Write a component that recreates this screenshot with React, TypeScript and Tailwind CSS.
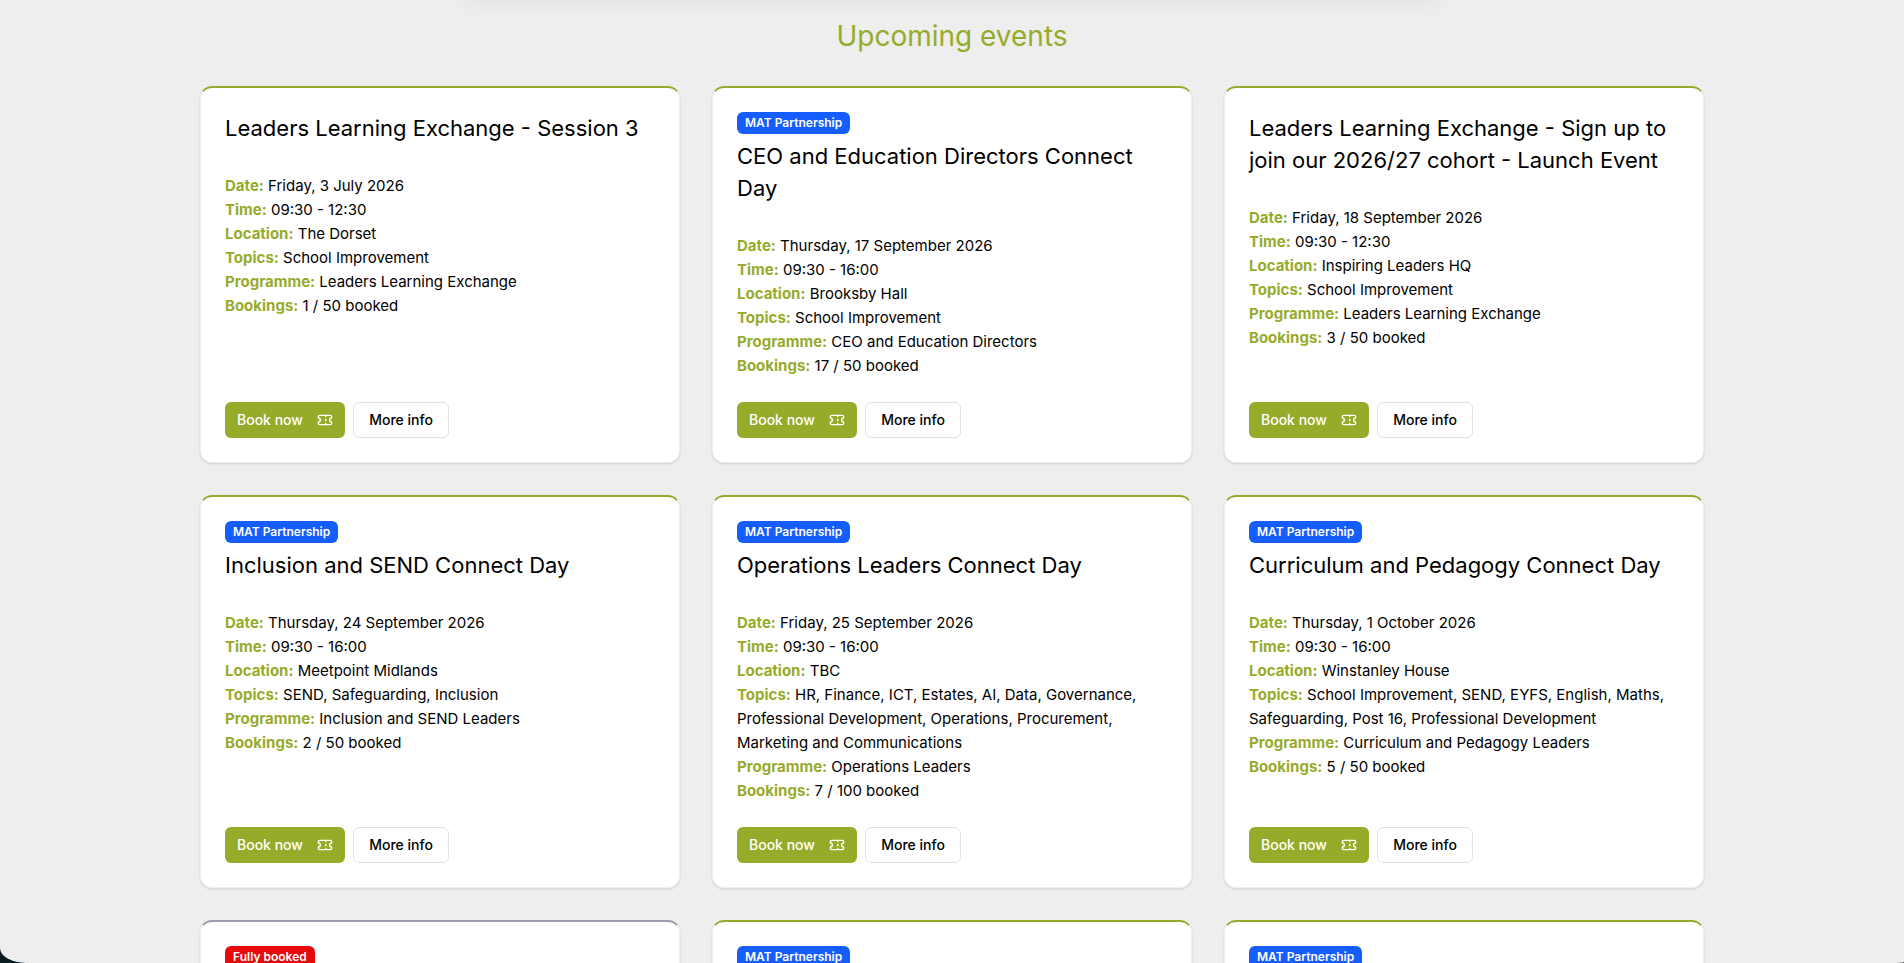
import React from "react";

type Badge = "partnership" | "full";

interface EventItem {
  title: string;
  badge?: Badge;
  date: string;
  time: string;
  location: string;
  topics: string;
  programme: string;
  bookings: string;
}

const EVENTS: EventItem[] = [
  {
    title: "Leaders Learning Exchange - Session 3",
    date: "Friday, 3 July 2026",
    time: "09:30 - 12:30",
    location: "The Dorset",
    topics: "School Improvement",
    programme: "Leaders Learning Exchange",
    bookings: "1 / 50 booked",
  },
  {
    title: "CEO and Education Directors Connect Day",
    badge: "partnership",
    date: "Thursday, 17 September 2026",
    time: "09:30 - 16:00",
    location: "Brooksby Hall",
    topics: "School Improvement",
    programme: "CEO and Education Directors",
    bookings: "17 / 50 booked",
  },
  {
    title: "Leaders Learning Exchange - Sign up to join our 2026/27 cohort - Launch Event",
    date: "Friday, 18 September 2026",
    time: "09:30 - 12:30",
    location: "Inspiring Leaders HQ",
    topics: "School Improvement",
    programme: "Leaders Learning Exchange",
    bookings: "3 / 50 booked",
  },
  {
    title: "Inclusion and SEND Connect Day",
    badge: "partnership",
    date: "Thursday, 24 September 2026",
    time: "09:30 - 16:00",
    location: "Meetpoint Midlands",
    topics: "SEND, Safeguarding, Inclusion",
    programme: "Inclusion and SEND Leaders",
    bookings: "2 / 50 booked",
  },
  {
    title: "Operations Leaders Connect Day",
    badge: "partnership",
    date: "Friday, 25 September 2026",
    time: "09:30 - 16:00",
    location: "TBC",
    topics:
      "HR, Finance, ICT, Estates, AI, Data, Governance, Professional Development, Operations, Procurement, Marketing and Communications",
    programme: "Operations Leaders",
    bookings: "7 / 100 booked",
  },
  {
    title: "Curriculum and Pedagogy Connect Day",
    badge: "partnership",
    date: "Thursday, 1 October 2026",
    time: "09:30 - 16:00",
    location: "Winstanley House",
    topics:
      "School Improvement, SEND, EYFS, English, Maths, Safeguarding, Post 16, Professional Development",
    programme: "Curriculum and Pedagogy Leaders",
    bookings: "5 / 50 booked",
  },
];

const NEXT_BADGES: Badge[] = ["full", "partnership", "partnership"];

function TicketIcon() {
  return (
    <svg
      className="size-4"
      viewBox="0 0 24 24"
      fill="none"
      stroke="currentColor"
      strokeWidth="2"
      strokeLinecap="round"
      strokeLinejoin="round"
      aria-hidden="true"
    >
      <path d="M2 9a3 3 0 0 1 0 6v2a2 2 0 0 0 2 2h16a2 2 0 0 0 2-2v-2a3 3 0 0 1 0-6V7a2 2 0 0 0-2-2H4a2 2 0 0 0-2 2Z" />
      <path d="M13 5v2" />
      <path d="M13 17v2" />
      <path d="M13 11v2" />
    </svg>
  );
}

function BadgeLabel({ kind }: { kind: Badge }) {
  const full = kind === "full";
  return (
    <span
      className={
        full
          ? "mb-1.5 self-start rounded-md bg-[#e60a0a] px-2 py-[3px] text-xs font-semibold text-white"
          : "mb-1.5 self-start rounded-md bg-[#155dfc] px-2 py-[3px] text-xs font-semibold text-white"
      }
    >
      {full ? "Fully booked" : "MAT Partnership"}
    </span>
  );
}

function Card({ muted, children }: { muted?: boolean; children?: React.ReactNode }) {
  return (
    <article
      className={
        muted
          ? "flex flex-col rounded-xl border border-t-2 border-[#eeeeee] border-t-[#9a9bb0] bg-white p-6 shadow-sm"
          : "flex flex-col rounded-xl border border-t-2 border-[#eeeeee] border-t-[#97ab2b] bg-white p-6 shadow-sm"
      }
    >
      {children}
    </article>
  );
}

function Detail({ label, value }: { label: string; value: string }) {
  return (
    <div>
      <dt className="inline font-bold text-[#97ab2b]">{label}:</dt> <dd className="inline">{value}</dd>
    </div>
  );
}

function EventCard({ event }: { event: EventItem }) {
  return (
    <Card>
      {event.badge && <BadgeLabel kind={event.badge} />}
      <h3 className="text-[22px] leading-8">{event.title}</h3>
      <dl className="mt-[30px] mb-6 text-[15px] leading-6">
        <Detail label="Date" value={event.date} />
        <Detail label="Time" value={event.time} />
        <Detail label="Location" value={event.location} />
        <Detail label="Topics" value={event.topics} />
        <Detail label="Programme" value={event.programme} />
        <Detail label="Bookings" value={event.bookings} />
      </dl>
      <div className="mt-auto flex gap-2 text-sm font-medium">
        <button
          type="button"
          className="flex h-9 w-[120px] items-center justify-between rounded-md bg-[#97ab2b] px-3 text-white"
        >
          Book now
          <TicketIcon />
        </button>
        <button type="button" className="h-9 w-24 rounded-md border border-[#e2e2e2] bg-white">
          More info
        </button>
      </div>
    </Card>
  );
}

export default function App() {
  return (
    <div className="h-screen overflow-hidden bg-[#0b1c20] font-['Inter',sans-serif] text-black">
      <div className="relative h-full overflow-hidden rounded-bl-[26px_15px] rounded-br-[12px_1px] bg-[#eeeeee]">
        <div className="absolute inset-x-0 -top-10 mx-auto h-8 max-w-[952px] shadow-[0_4px_20px_8px_rgba(0,0,0,0.05)]" />
        <main className="mx-auto max-w-[1536px] px-4 pt-[18px]">
          <h2 className="mb-8 text-center text-[28px] leading-9 text-[#97ab2b]">Upcoming events</h2>
          <div className="grid grid-cols-3 gap-8">
            {EVENTS.map((event) => (
              <EventCard key={event.title} event={event} />
            ))}
            {NEXT_BADGES.map((kind, i) => (
              <Card key={i} muted={kind === "full"}>
                <BadgeLabel kind={kind} />
              </Card>
            ))}
          </div>
        </main>
      </div>
    </div>
  );
}
